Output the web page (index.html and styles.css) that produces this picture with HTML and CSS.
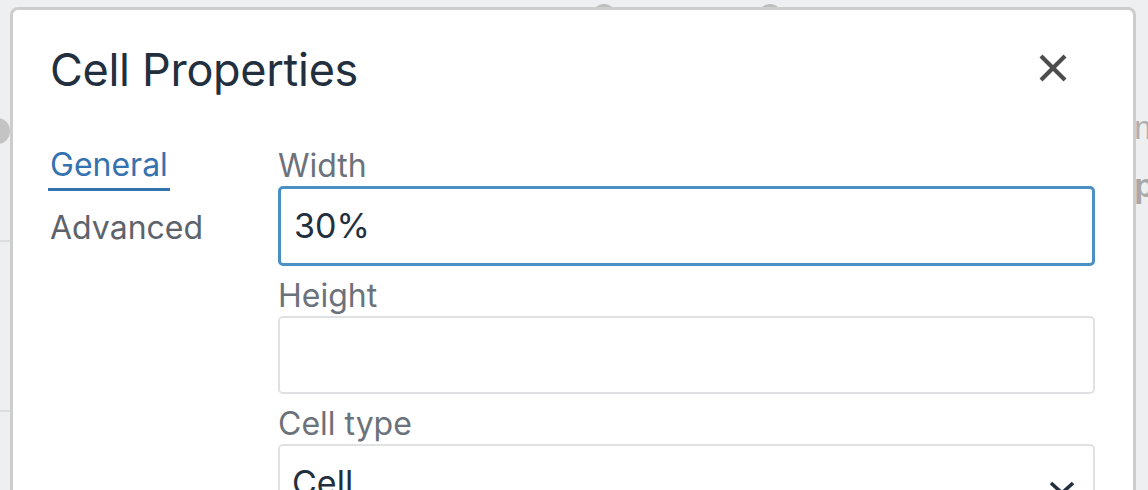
FILE: index.html
```html
<!DOCTYPE html>
<html lang="en">
<head>
<meta charset="utf-8">
<title>Cell Properties</title>
<link rel="stylesheet" href="styles.css">
</head>
<body>
<div class="backdrop" aria-hidden="true">
  <span class="bg-arc"></span>
  <span class="bg-line bg-line-1"></span>
  <span class="bg-line bg-line-2"></span>
  <span class="bg-dot bg-dot-1"></span>
  <span class="bg-dot bg-dot-2"></span>
  <span class="bg-letter bg-m">m</span>
  <span class="bg-letter bg-p">p</span>
</div>
<div class="dialog">
  <div class="dialog-header">
    <h1 class="dialog-title">Cell Properties</h1>
    <button class="close-btn" aria-label="Close">
      <svg width="30" height="30" viewBox="0 0 30 30"><path d="M3 3 L27 27 M27 3 L3 27" stroke="#4d4d4d" stroke-width="4.2" stroke-linecap="butt" fill="none"/></svg>
    </button>
  </div>
  <div class="dialog-body">
    <nav class="tabs">
      <div class="tab tab-active">General</div>
      <div class="tab">Advanced</div>
    </nav>
    <div class="form">
      <div class="field">
        <label class="label">Width</label>
        <div class="input input-focus">30%</div>
      </div>
      <div class="field">
        <label class="label">Height</label>
        <div class="input"></div>
      </div>
      <div class="field">
        <label class="label">Cell type</label>
        <div class="input select">
          <span>Cell</span>
          <svg class="chevron" width="26" height="16" viewBox="0 0 26 16"><path d="M2 3 L13 13 L24 3" stroke="#222f3e" stroke-width="3.6" fill="none"/></svg>
        </div>
      </div>
    </div>
  </div>
</div>
</body>
</html>
```

FILE: styles.css
```css
html, body {
  margin: 0;
  padding: 0;
  height: 100%;
  overflow: hidden;
}
body {
  background: #eeeff0;
  font-family: Inter, "Noto Sans", "Liberation Sans", sans-serif;
  position: relative;
}
.backdrop {
  position: absolute;
  inset: 0;
}
.bg-arc {
  position: absolute;
  left: -14px;
  top: 118px;
  width: 24px;
  height: 26px;
  border-radius: 50%;
  background: #c4c4c4;
}
.bg-line {
  position: absolute;
  left: 0;
  width: 12px;
  height: 2px;
  background: #dddddd;
}
.bg-line-1 { top: 240px; }
.bg-line-2 { top: 410px; }
.bg-dot {
  position: absolute;
  top: 4px;
  width: 24px;
  height: 24px;
  border-radius: 50%;
  background: #bdbdbd;
}
.bg-dot-1 { left: 592px; }
.bg-dot-2 { left: 758px; }
.bg-letter {
  position: absolute;
  left: 1134px;
  font-size: 34px;
  color: #b0b0b0;
  font-family: "Liberation Sans", sans-serif;
}
.bg-m { top: 108px; }
.bg-p { top: 166px; font-weight: bold; color: #a8a8a8; }

.dialog {
  position: relative;
  margin: 7px 0 0 10px;
  width: 1120px;
  height: 700px;
  background: #ffffff;
  border: 3px solid #cdcdcd;
  border-radius: 8px;
  box-sizing: content-box;
}
.dialog-header {
  display: flex;
  justify-content: space-between;
  align-items: flex-start;
  padding: 32px 0 0 37px;
}
.dialog-title {
  margin: 0;
  font-size: 45px;
  line-height: 56px;
  font-weight: 400;
  color: #222f3e;
  letter-spacing: -0.3px;
}
.close-btn {
  margin: 11px 65px 0 0;
  padding: 0;
  border: 0;
  background: none;
  width: 30px;
  height: 30px;
  display: flex;
}
.dialog-body {
  display: flex;
  padding: 47px 38px 0 37px;
}
.tabs {
  width: 228px;
  flex: none;
  display: flex;
  flex-direction: column;
  align-items: flex-start;
  gap: 17px;
  padding-top: 0;
}
.tab {
  font-size: 32px;
  line-height: 40px;
  color: #5d636b;
  padding: 0 2px 3px;
  margin-left: -2px;
  border-bottom: 3px solid transparent;
}
.tab-active {
  color: #3572b0;
  border-bottom-color: #3572b0;
}
.form {
  flex: 1;
  display: flex;
  flex-direction: column;
  gap: 12px;
  padding-top: 3px;
}
.field {
  display: flex;
  flex-direction: column;
}
.label {
  font-size: 32px;
  line-height: 36px;
  color: #6c727b;
  margin-bottom: 2px;
}
.input {
  box-sizing: border-box;
  height: 78px;
  border: 2px solid #dfe1e3;
  border-radius: 5px;
  padding: 0 13px;
  font-size: 34px;
  line-height: 74px;
  color: #222f3e;
  display: flex;
  align-items: center;
}
.input-focus {
  border: 3px solid #4b90c4;
  height: 80px;
}
.select {
  justify-content: space-between;
  align-items: flex-start;
  padding: 7px 18px 0 12px;
}
.select span {
  line-height: 60px;
}
.chevron {
  margin-top: 27px;
}
```
